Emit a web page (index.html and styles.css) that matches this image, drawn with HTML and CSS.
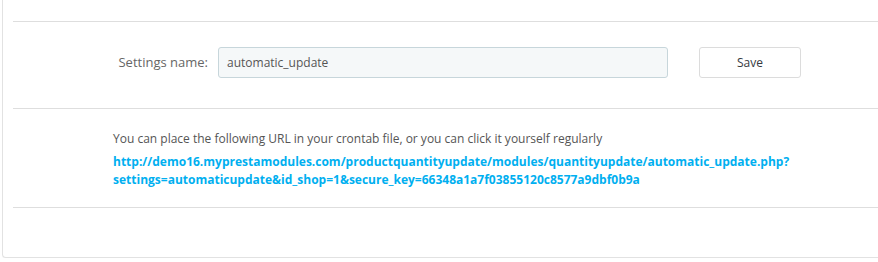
FILE: index.html
```html
<!DOCTYPE html>
<html>
<head>
<meta charset="utf-8">
<link rel="stylesheet" href="styles.css">
</head>
<body>
<div class="panel">
  <hr class="sep">
  <div class="form-row">
    <label class="label">Settings name:</label>
    <div class="input">automatic_update</div>
    <button class="btn">Save</button>
  </div>
  <hr class="sep">
  <div class="cron">
    <p class="note">You can place the following URL in your crontab file, or you can click it yourself regularly</p>
    <a class="url" href="#">http://demo16.myprestamodules.com/productquantityupdate/modules/quantityupdate/automatic_update.php?<br>settings=automaticupdate&amp;id_shop=1&amp;secure_key=66348a1a7f03855120c8577a9dbf0b9a</a>
  </div>
  <hr class="sep">
</div>
</body>
</html>
```

FILE: styles.css
```css
html, body {
  margin: 0;
  padding: 0;
  background: #fff;
  overflow: hidden;
}
body {
  font-family: "Open Sans", "Liberation Sans", sans-serif;
  font-size: 12px;
  line-height: 1.42857;
  color: #555;
}
.panel {
  margin-left: 2px;
  width: 900px;
  height: 258px;
  box-sizing: border-box;
  border: 1px solid #e2e2e2;
  border-top: none;
  border-radius: 0 0 4px 4px;
  box-shadow: 0 1px 0 rgba(0, 0, 0, 0.04);
  padding: 21px 0 0 10px;
}
.sep {
  margin: 0;
  border: 0;
  border-top: 1px solid #dedede;
  height: 0;
}
.form-row {
  display: flex;
  align-items: center;
  padding: 25px 0 30px 0;
}
.label {
  width: 195px;
  text-align: right;
  font-size: 13px;
  color: #666;
  margin-right: 10px;
}
.input {
  box-sizing: border-box;
  width: 450px;
  height: 31px;
  line-height: 29px;
  border: 1px solid #c7d6db;
  border-radius: 3px;
  background: #f5f8f9;
  padding: 0 8px;
  color: #555;
}
.btn {
  box-sizing: border-box;
  margin-left: 31px;
  width: 102px;
  height: 31px;
  border: 1px solid #dcdcdc;
  border-radius: 3px;
  background: #fff;
  font-family: inherit;
  font-size: 12px;
  color: #363a41;
  padding: 0;
}
.cron {
  padding: 21px 0 18px 100px;
}
.note {
  margin: 0 0 6px 0;
  color: #555;
}
.url {
  display: block;
  color: #00aff0;
  font-weight: bold;
  text-decoration: none;
  line-height: 18px;
}
```
